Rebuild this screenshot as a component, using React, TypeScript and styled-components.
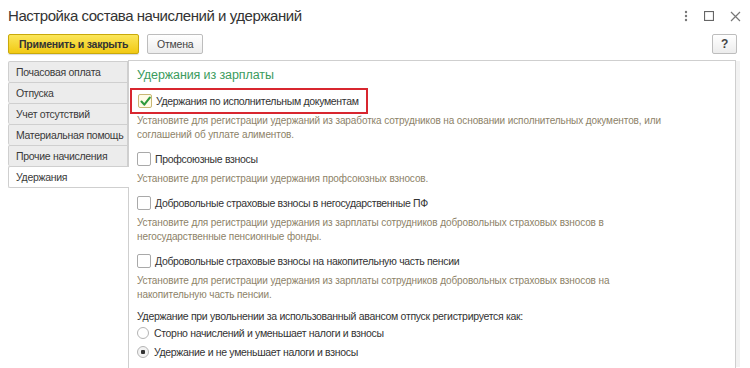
import React from "react"
import styled, { createGlobalStyle } from "styled-components"

const GlobalStyle = createGlobalStyle`
    html, body {
        margin: 0;
        padding: 0;
        background: #fff;
    }
    body {
        font-family: "Liberation Sans", Arial, sans-serif;
        color: #333;
        width: 750px;
        height: 368px;
        overflow: hidden;
    }
`

interface Option {
    label: string;
    checked?: boolean;
    highlight?: boolean;
    description: string[];
}

const tabs = [
    "Почасовая оплата",
    "Отпуска",
    "Учет отсутствий",
    "Материальная помощь",
    "Прочие начисления",
    "Удержания",
]

const options: Option[] = [
    {
        label: "Удержания по исполнительным документам",
        checked: true,
        highlight: true,
        description: [
            "Установите для регистрации удержаний из заработка сотрудников на основании исполнительных документов, или",
            "соглашений об уплате алиментов.",
        ],
    },
    {
        label: "Профсоюзные взносы",
        description: ["Установите для регистрации удержания профсоюзных взносов."],
    },
    {
        label: "Добровольные страховые взносы в негосударственные ПФ",
        description: [
            "Установите для регистрации удержания из зарплаты сотрудников добровольных страховых взносов в",
            "негосударственные пенсионные фонды.",
        ],
    },
    {
        label: "Добровольные страховые взносы на накопительную часть пенсии",
        description: [
            "Установите для регистрации удержания из зарплаты сотрудников добровольных страховых взносов на",
            "накопительную часть пенсии.",
        ],
    },
]

const radios = [
    { label: "Сторно начислений и уменьшает налоги и взносы", selected: false },
    { label: "Удержание и не уменьшает налоги и взносы", selected: true },
]

const CheckBox: React.FC<{ checked?: boolean }> = ({ checked }) => (
    <Box $checked={checked}>
        {checked && (
            <svg width="11" height="11" viewBox="0 0 11 11">
                <path d="M1.5 5.5 L4.3 8.6 L9.8 1.6" fill="none" stroke="#2e9a3c" strokeWidth="2.1" strokeLinecap="round" strokeLinejoin="round" />
            </svg>
        )}
    </Box>
)

export default function App() {
    return (
        <Window>
            <GlobalStyle />
            <Header>
                <Title>Настройка состава начислений и удержаний</Title>
                <Controls>
                    <svg width="4" height="12" viewBox="0 0 4 12">
                        <circle cx="2" cy="2" r="1.2" fill="#777" />
                        <circle cx="2" cy="6" r="1.2" fill="#777" />
                        <circle cx="2" cy="10" r="1.2" fill="#777" />
                    </svg>
                    <svg width="10" height="10" viewBox="0 0 10 10">
                        <rect x="0.5" y="0.5" width="9" height="9" fill="none" stroke="#666" strokeWidth="1.2" />
                    </svg>
                    <svg width="11" height="11" viewBox="0 0 11 11">
                        <path d="M1 1 L10 10 M10 1 L1 10" stroke="#777" strokeWidth="1.2" />
                    </svg>
                </Controls>
            </Header>
            <Toolbar>
                <PrimaryButton>Применить и закрыть</PrimaryButton>
                <Button>Отмена</Button>
                <HelpButton>?</HelpButton>
            </Toolbar>
            <Body>
                <TabList>
                    {tabs.map(tab => (
                        <Tab key={tab} $active={tab === "Удержания"}>{tab}</Tab>
                    ))}
                </TabList>
                <Panel>
                    <Heading>Удержания из зарплаты</Heading>
                    {options.map(option => (
                        <Section key={option.label}>
                            <CheckRow $highlight={option.highlight}>
                                <CheckBox checked={option.checked} />
                                <Label>{option.label}</Label>
                            </CheckRow>
                            <Description $tight={option.highlight}>
                                {option.description.map(line => <div key={line}>{line}</div>)}
                            </Description>
                        </Section>
                    ))}
                    <Question>Удержание при увольнении за использованный авансом отпуск регистрируется как:</Question>
                    {radios.map(radio => (
                        <RadioRow key={radio.label}>
                            <Radio $selected={radio.selected} />
                            <Label>{radio.label}</Label>
                        </RadioRow>
                    ))}
                </Panel>
            </Body>
        </Window>
    )
}

const Window = styled.div`
    width: 750px;
    height: 368px;
    display: flex;
    flex-direction: column;
    overflow: hidden;
`

const Header = styled.div`
    display: flex;
    align-items: center;
    justify-content: space-between;
    height: 28px;
    padding: 1px 9px 0 8px;
`

const Title = styled.div`
    font-size: 15px;
    letter-spacing: -0.45px;
    color: #333;
`

const Controls = styled.div`
    display: flex;
    align-items: center;
    gap: 16px;
    padding-top: 2px;
`

const Toolbar = styled.div`
    display: flex;
    align-items: center;
    gap: 8px;
    height: 20px;
    margin-top: 5px;
    padding: 0 13px 0 8px;
`

const Button = styled.div`
    height: 18px;
    box-sizing: content-box;
    padding: 0 9px;
    display: flex;
    align-items: center;
    font-size: 10.5px;
    letter-spacing: -0.25px;
    color: #444;
    border: 1px solid #bdbdbd;
    border-radius: 2px;
    background: linear-gradient(#ffffff, #ececec);
`

const PrimaryButton = styled(Button)`
    font-weight: bold;
    color: #333;
    padding: 0 10px;
    border-color: #c9a90a;
    background: linear-gradient(#fbe65a, #f2c913);
    box-shadow: 0 1px 1px rgba(0, 0, 0, 0.15);
`

const HelpButton = styled(Button)`
    margin-left: auto;
    padding: 0 8px;
    font-weight: bold;
    font-size: 12px;
`

const Body = styled.div`
    display: flex;
    flex: 1;
    margin-top: 6px;
    padding-left: 8px;
`

const TabList = styled.div`
    width: 120px;
    display: flex;
    flex-direction: column;
    padding-top: 1px;
`

const Tab = styled.div<{ $active?: boolean }>`
    height: 20px;
    line-height: 20px;
    padding-left: 7px;
    font-size: 10.5px;
    letter-spacing: -0.3px;
    color: #3a3a3a;
    white-space: nowrap;
    border: 1px solid #cfcfcf;
    border-right: ${p => (p.$active ? "none" : "1px solid #cfcfcf")};
    border-bottom: none;
    border-radius: 2px 0 0 2px;
    background: ${p => (p.$active ? "#fff" : "#ececec")};
    position: relative;
    z-index: 1;
    margin-right: ${p => (p.$active ? "-1px" : "0")};
    &:last-child {
        border-bottom: 1px solid #cfcfcf;
    }
`

const Panel = styled.div`
    flex: 1;
    margin-right: 14px;
    border: 1px solid #cfcfcf;
    border-bottom: none;
    padding: 6px 0 0 8px;
    box-shadow: 5px 0 0 -1px #f2f2f2;
`

const Heading = styled.div`
    font-size: 12.5px;
    letter-spacing: -0.1px;
    line-height: 16px;
    color: #3b9b5d;
    margin-bottom: 5px;
`

const Section = styled.div`
    margin-bottom: 7px;
`

const CheckRow = styled.div<{ $highlight?: boolean }>`
    display: ${p => (p.$highlight ? "inline-flex" : "flex")};
    align-items: center;
    gap: 4px;
    height: 20px;
    padding: ${p => (p.$highlight ? "1px 7px 1px 6px" : "0")};
    margin-left: ${p => (p.$highlight ? "-7px" : "0")};
    border: ${p => (p.$highlight ? "2px solid #d8262f" : "none")};
`

const Box = styled.span<{ $checked?: boolean }>`
    width: 12px;
    height: 12px;
    flex-shrink: 0;
    display: flex;
    align-items: center;
    justify-content: center;
    border: 1px solid ${p => (p.$checked ? "#c9b773" : "#a9a9a9")};
    border-radius: 2px;
    background: ${p => (p.$checked ? "#fffbe6" : "#fff")};
`

const Label = styled.span`
    font-size: 10.5px;
    letter-spacing: -0.33px;
    color: #333;
    white-space: nowrap;
`

const Description = styled.div<{ $tight?: boolean }>`
    margin-top: ${p => (p.$tight ? "0" : "3px")};
    font-size: 10px;
    letter-spacing: -0.1px;
    line-height: 14px;
    color: #8d8268;
    white-space: nowrap;
`

const Question = styled.div`
    margin-top: 4px;
    font-size: 10.5px;
    letter-spacing: -0.3px;
    line-height: 14px;
    color: #333;
    white-space: nowrap;
`

const RadioRow = styled.div`
    display: flex;
    align-items: center;
    gap: 5px;
    height: 19px;
`

const Radio = styled.span<{ $selected?: boolean }>`
    width: 12px;
    height: 12px;
    border-radius: 50%;
    box-sizing: border-box;
    border: 1px solid #b4b4b4;
    background: ${p => (p.$selected ? "radial-gradient(circle, #333 0 2px, #f2f2f2 2.5px)" : "#fff")};
`
